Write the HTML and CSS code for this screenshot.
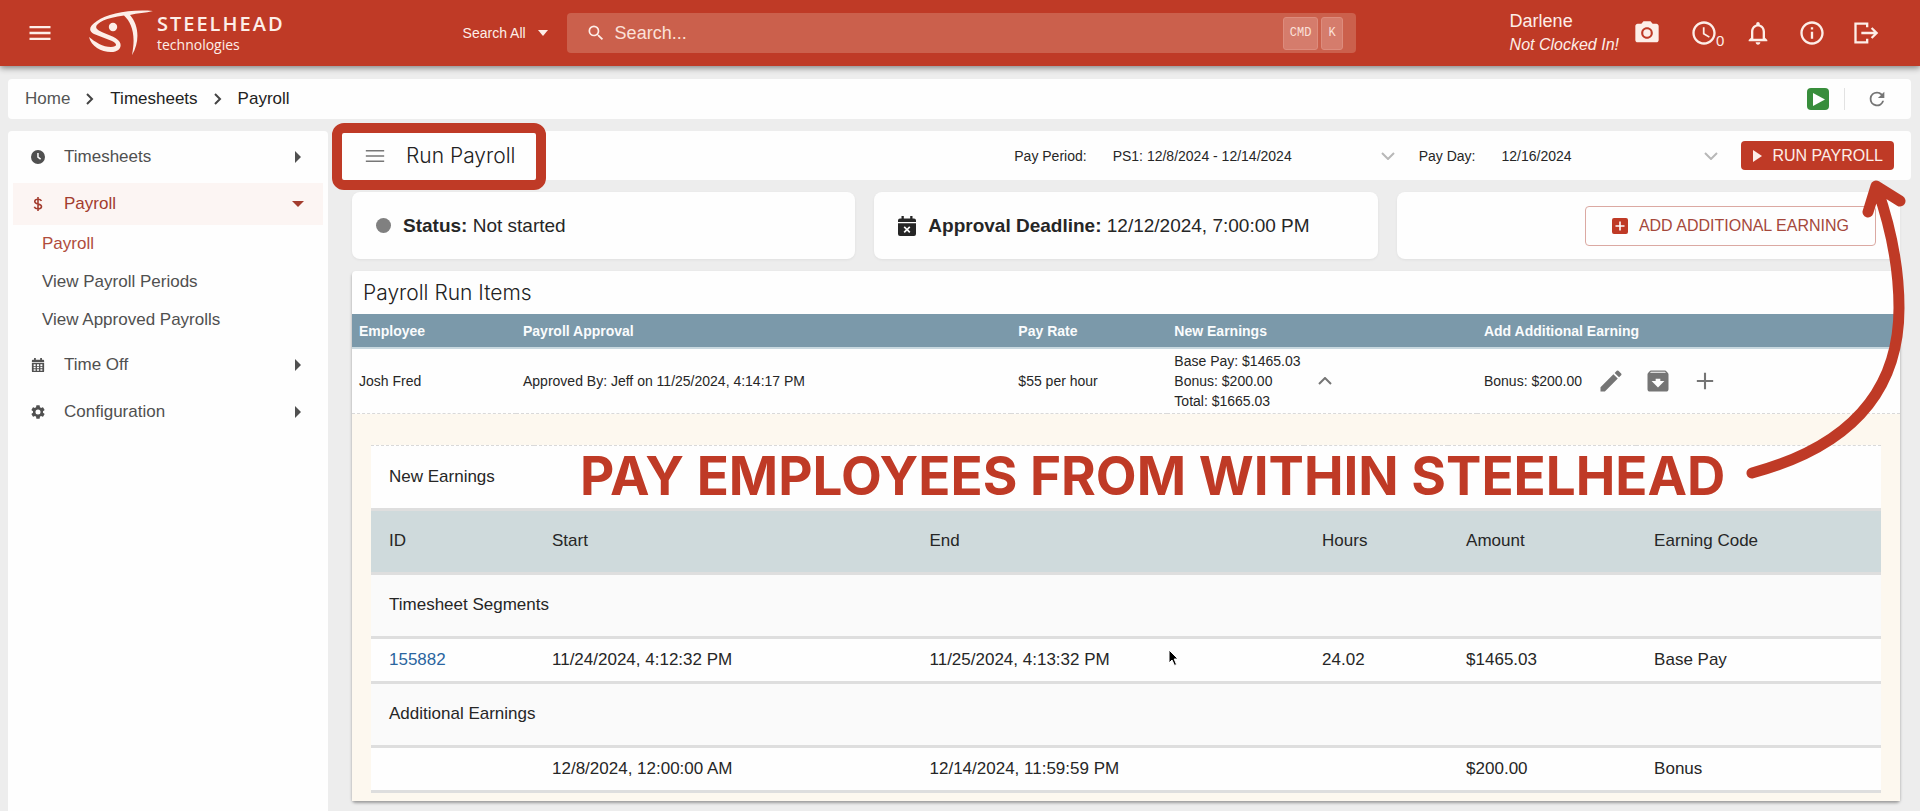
FILE: index.html
```html
<!DOCTYPE html>
<html lang="en">
<head>
<meta charset="utf-8">
<meta name="viewport" content="width=device-width, initial-scale=1">
<title>Run Payroll</title>
<link rel="stylesheet" href="styles.css">
</head>
<body>
<header class="topbar">
  <button class="icon-btn menu-btn" aria-label="Menu"><svg class="icon-lg" viewBox="0 0 24 24"><path d="M3 18h18v-2H3v2zm0-5h18v-2H3v2zm0-7v2h18V6H3z"/></svg></button>
  <a class="brand" href="#">
    <svg class="brand-mark" viewBox="0 0 64 48" aria-hidden="true">
      <path d="M64 2C40 0 18 5 8 12C0 17 -1 22 5 25L23 32C29 35 28 38 22 38C14 38 6 33 0 28C2 37 12 43 22 43C32 43 34 35 29 31C24 26 12 24 8 20C4 16 14 9 35 6.500C43 14 47 26 43 46C51 33 50 16 41 6C48 4 57 4 64 2Z"/>
      <circle cx="24" cy="18" r="4.200"/>
    </svg>
    <span class="brand-text"><span class="brand-name">STEELHEAD</span><span class="brand-sub">technologies</span></span>
  </a>
  <div class="search">
    <button class="scope">Search All <svg class="caret" viewBox="0 0 10 6"><path d="M0 0h10L5 6z"/></svg></button>
    <div class="search-box">
      <svg class="icon-sm" viewBox="0 0 24 24"><path d="M15.500 14h-.79l-.28-.27A6.470 6.470 0 0 0 16 9.500 6.500 6.500 0 1 0 9.500 16c1.610 0 3.090-.59 4.230-1.570l.27.28v.79l5 4.990L20.490 19l-4.990-5zm-6 0C7.010 14 5 11.990 5 9.500S7.010 5 9.500 5 14 7.010 14 9.500 11.990 14 9.500 14z"/></svg>
      <input class="search-input" type="text" placeholder="Search..." aria-label="Search">
      <kbd class="key">CMD</kbd><kbd class="key">K</kbd>
    </div>
  </div>
  <div class="account">
    <div class="user"><span>Darlene</span><em>Not Clocked In!</em></div>
    <button class="icon-btn" aria-label="Camera"><svg class="icon-lg" viewBox="0 0 24 24"><circle cx="12" cy="12" r="3.200"/><path d="M9 2 7.170 4H4c-1.100 0-2 .9-2 2v12c0 1.100.9 2 2 2h16c1.100 0 2-.9 2-2V6c0-1.100-.9-2-2-2h-3.170L15 2H9zm3 15c-2.760 0-5-2.240-5-5s2.240-5 5-5 5 2.240 5 5-2.240 5-5 5z"/></svg></button>
    <button class="icon-btn clock-btn" aria-label="Clock"><svg class="icon-lg" viewBox="0 0 24 24"><path d="M11.990 2C6.470 2 2 6.480 2 12s4.470 10 9.990 10C17.520 22 22 17.520 22 12S17.520 2 11.990 2zM12 20c-4.420 0-8-3.580-8-8s3.580-8 8-8 8 3.580 8 8-3.580 8-8 8zm.5-13H11v6l5.250 3.150.75-1.230-4.500-2.670z"/></svg><sub class="count">0</sub></button>
    <button class="icon-btn" aria-label="Notifications"><svg class="icon-lg" viewBox="0 0 24 24"><path d="M12 22c1.100 0 2-.9 2-2h-4c0 1.100.9 2 2 2zm6-6v-5c0-3.070-1.630-5.640-4.500-6.320V4c0-.83-.67-1.500-1.500-1.500s-1.500.67-1.500 1.500v.68C7.640 5.360 6 7.920 6 11v5l-2 2v1h16v-1l-2-2zm-2 1H8v-6c0-2.480 1.510-4.500 4-4.500s4 2.020 4 4.500v6z"/></svg></button>
    <button class="icon-btn" aria-label="Information"><svg class="icon-lg" viewBox="0 0 24 24"><path d="M11 7h2v2h-2zm0 4h2v6h-2zm1-9C6.480 2 2 6.480 2 12s4.480 10 10 10 10-4.480 10-10S17.520 2 12 2zm0 18c-4.410 0-8-3.590-8-8s3.590-8 8-8 8 3.590 8 8-3.590 8-8 8z"/></svg></button>
    <button class="icon-btn" aria-label="Log out"><svg class="icon-lg" viewBox="0 0 24 24"><path d="M14 3v4h-2V5H4v14h8v-2h2v4H2V3h12zm3.500 4 5 5-5 5-1.400-1.400 2.600-2.600H8v-2h10.700l-2.600-2.600L17.500 7z"/></svg></button>
  </div>
</header>

<div class="page">
  <div class="crumb-bar">
    <nav class="crumbs" aria-label="Breadcrumb">
      <a class="crumb-home" href="#">Home</a>
      <svg class="crumb-sep" viewBox="0 0 8 12"><path d="M1 1l5 5-5 5"/></svg>
      <a href="#">Timesheets</a>
      <svg class="crumb-sep" viewBox="0 0 8 12"><path d="M1 1l5 5-5 5"/></svg>
      <a href="#">Payroll</a>
    </nav>
    <div class="crumb-tools">
      <button class="play-btn" aria-label="Play video"><svg viewBox="0 0 22 22"><rect width="22" height="22" rx="4" fill="#388e3c"/><path d="M6 5v13l12-6.500z" fill="#fff"/></svg></button>
      <button class="refresh-btn" aria-label="Refresh"><svg class="icon-md" viewBox="0 0 24 24"><path d="M17.650 6.350A7.960 7.960 0 0 0 12 4a8 8 0 1 0 7.730 10h-2.080A6 6 0 1 1 12 6c1.660 0 3.140.69 4.220 1.780L13 11h7V4l-2.350 2.350z"/></svg></button>
    </div>
  </div>

  <div class="columns">
    <nav class="sidebar" aria-label="Sections">
      <a class="nav-item" href="#"><svg class="nav-icon" viewBox="0 0 16 16"><path fill-rule="evenodd" d="M8 0a8 8 0 1 0 0 16A8 8 0 0 0 8 0zm-.9 3.500h1.700v4.200l2.700 2-1 1.400-3.400-2.500z"/></svg><span>Timesheets</span><svg class="nav-arrow" viewBox="0 0 12 12"><path d="M3 0l6 6-6 6z"/></svg></a>
      <a class="nav-item active" href="#"><svg class="nav-icon" viewBox="0 0 16 16"><path d="M8 0v16M12 4.500C11 2.800 9.500 2.500 8 2.500c-2 0-3.700.8-3.700 2.600C4.300 9 12 6.800 12 10.800c0 1.800-1.800 2.700-4 2.700-2 0-3.600-.7-4.200-2.300" fill="none" stroke="currentColor" stroke-width="1.800"/></svg><span>Payroll</span><svg class="nav-arrow" viewBox="0 0 12 12"><path d="M0 3h12L6 9z"/></svg></a>
      <a class="sub-item active-sub" href="#">Payroll</a>
      <a class="sub-item" href="#">View Payroll Periods</a>
      <a class="sub-item last-sub" href="#">View Approved Payrolls</a>
      <a class="nav-item" href="#"><svg class="nav-icon" viewBox="0 0 16 16"><path fill-rule="evenodd" d="M3.500 0h2v2h5V0h2v2H14a1 1 0 0 1 1 1v1.500H1V3a1 1 0 0 1 1-1h1.500zM1 5.500h14V15a1 1 0 0 1-1 1H2a1 1 0 0 1-1-1zM3 7v2h2.300V7zm3.800 0v2h2.400V7zm3.900 0v2H13V7zM3 10v1.700h2.300V10zm3.800 0v1.700h2.400V10zm3.900 0v1.700H13V10zM3 12.800v1.700h2.300v-1.700zm3.800 0v1.700h2.400v-1.700zm3.900 0v1.700H13v-1.700z"/></svg><span>Time Off</span><svg class="nav-arrow" viewBox="0 0 12 12"><path d="M3 0l6 6-6 6z"/></svg></a>
      <a class="nav-item" href="#"><svg class="nav-icon gear" viewBox="2 2 20 20"><path d="M19.140 12.940c.04-.3.06-.61.06-.94 0-.32-.02-.64-.07-.94l2.030-1.580a.49.49 0 0 0 .12-.61l-1.920-3.320a.49.49 0 0 0-.59-.22l-2.390.96a7 7 0 0 0-1.620-.94l-.36-2.540a.48.48 0 0 0-.48-.41h-3.840a.48.48 0 0 0-.47.41l-.36 2.540a7 7 0 0 0-1.620.94l-2.390-.96a.49.49 0 0 0-.59.22L2.740 8.870a.48.48 0 0 0 .12.610l2.030 1.580a6 6 0 0 0 0 1.880l-2.030 1.580a.49.49 0 0 0-.12.610l1.920 3.320c.12.22.37.29.59.22l2.390-.96c.5.38 1.030.7 1.620.94l.36 2.540c.05.24.24.41.48.41h3.840c.24 0 .44-.17.47-.41l.36-2.540a7 7 0 0 0 1.620-.94l2.390.96c.22.08.47 0 .59-.22l1.920-3.320a.48.48 0 0 0-.12-.61zM12 15.600a3.600 3.600 0 1 1 0-7.200 3.600 3.600 0 0 1 0 7.200z"/></svg><span>Configuration</span><svg class="nav-arrow" viewBox="0 0 12 12"><path d="M3 0l6 6-6 6z"/></svg></a>
    </nav>

    <main class="main">
      <div class="title-bar">
        <button class="icon-btn title-menu" aria-label="Options"><svg class="icon-md" viewBox="0 0 24 24"><path d="M2 18.500h20v-1.700H2zm0-5.700h20v-1.700H2zM2 5.400v1.700h20V5.400z"/></svg></button>
        <h1 class="heading">Run Payroll</h1>
        <span class="title-frame" aria-hidden="true"></span>
        <div class="filters">
          <label class="filter-label" for="period">Pay Period:</label>
          <span class="picker picker-period"><select id="period"><option>PS1: 12/8/2024 - 12/14/2024</option></select><svg viewBox="0 0 14 8"><path d="M1 1l6 6 6-6"/></svg></span>
          <label class="filter-label" for="payday">Pay Day:</label>
          <span class="picker picker-day"><select id="payday"><option>12/16/2024</option></select><svg viewBox="0 0 14 8"><path d="M1 1l6 6 6-6"/></svg></span>
          <button class="run-btn"><svg viewBox="0 0 10 12"><path d="M1 0l9 6-9 6z"/></svg>RUN PAYROLL</button>
        </div>
      </div>

      <div class="content">
        <section class="cards">
          <div class="card"><span class="dot"></span><span><b>Status:</b> Not started</span></div>
          <div class="card"><svg class="card-icon" viewBox="0 0 18 20"><path fill-rule="evenodd" d="M3.500 0h2.300v2.500h6.400V0h2.300v2.500H16a2 2 0 0 1 2 2V6H0V4.500a2 2 0 0 1 2-2h1.500zM0 7.200h18V18a2 2 0 0 1-2 2H2a2 2 0 0 1-2-2zm6.800 3L5.600 11.400l2.200 2.200-2.200 2.200 1.200 1.200L9 14.800l2.200 2.200 1.200-1.200-2.200-2.200 2.200-2.200-1.200-1.200L9 12.400z"/></svg><span><b>Approval Deadline:</b> 12/12/2024, 7:00:00 PM</span></div>
          <div class="card card-action"><button class="add-btn"><svg viewBox="0 0 16 16"><path fill-rule="evenodd" d="M2 0h12a2 2 0 0 1 2 2v12a2 2 0 0 1-2 2H2a2 2 0 0 1-2-2V2a2 2 0 0 1 2-2zm5.200 3.500v3.700H3.500v1.600h3.700v3.700h1.600V8.800h3.700V7.200H8.800V3.500z"/></svg>ADD ADDITIONAL EARNING</button></div>
        </section>

        <section class="panel">
          <h2 class="heading panel-title">Payroll Run Items</h2>
          <table class="run-table">
            <colgroup><col class="r1"><col class="r2"><col class="r3"><col class="r4"><col class="r5"></colgroup>
            <thead><tr><th>Employee</th><th>Payroll Approval</th><th>Pay Rate</th><th>New Earnings</th><th>Add Additional Earning</th></tr></thead>
            <tbody><tr>
              <td>Josh Fred</td>
              <td>Approved By: Jeff on 11/25/2024, 4:14:17 PM</td>
              <td>$55 per hour</td>
              <td><div class="earn"><span>Base Pay: $1465.03<br>Bonus: $200.00<br>Total: $1665.03</span><button class="icon-btn collapse" aria-label="Collapse"><svg viewBox="0 0 14 8"><path d="M1 7l6-6 6 6"/></svg></button></div></td>
              <td><div class="bonus"><span>Bonus: $200.00</span>
                <button class="icon-btn" aria-label="Edit"><svg class="icon-lg" viewBox="0 0 24 24"><path d="M3 17.250V21h3.750L17.810 9.940l-3.750-3.750L3 17.250zM20.710 7.040a1 1 0 0 0 0-1.410l-2.340-2.340a1 1 0 0 0-1.410 0l-1.830 1.830 3.750 3.750 1.830-1.830z"/></svg></button>
                <button class="icon-btn" aria-label="Archive"><svg class="icon-lg" viewBox="0 0 24 24"><path d="M20.540 5.230l-1.390-1.680C18.880 3.210 18.470 3 18 3H6c-.47 0-.88.21-1.160.55L3.460 5.230C3.170 5.570 3 6.020 3 6.500V19c0 1.100.9 2 2 2h14c1.100 0 2-.9 2-2V6.500c0-.48-.17-.93-.46-1.270zM12 17.500L6.500 12H10v-2h4v2h3.500L12 17.500zM5.120 5l.81-1h12l.94 1H5.120z"/></svg></button>
                <button class="icon-btn" aria-label="Add"><svg class="icon-lg" viewBox="0 0 24 24"><path d="M19 12.900h-6.100V19h-1.800v-6.100H5v-1.800h6.100V5h1.800v6.100H19z"/></svg></button></div></td>
            </tr></tbody>
          </table>
          <div class="detail">
            <table class="detail-table">
              <colgroup><col class="d1"><col class="d2"><col class="d3"><col class="d4"><col class="d5"><col class="d6"></colgroup>
              <tbody>
                <tr class="tall"><td colspan="6">New Earnings</td></tr>
                <tr class="tall head"><th>ID</th><th>Start</th><th>End</th><th>Hours</th><th>Amount</th><th>Earning Code</th></tr>
                <tr class="tall group"><td colspan="6">Timesheet Segments</td></tr>
                <tr><td><a href="#">155882</a></td><td>11/24/2024, 4:12:32 PM</td><td>11/25/2024, 4:13:32 PM</td><td>24.02</td><td>$1465.03</td><td>Base Pay</td></tr>
                <tr class="tall group"><td colspan="6">Additional Earnings</td></tr>
                <tr><td></td><td>12/8/2024, 12:00:00 AM</td><td>12/14/2024, 11:59:59 PM</td><td></td><td>$200.00</td><td>Bonus</td></tr>
              </tbody>
            </table>
          </div>
          <p class="callout">PAY EMPLOYEES FROM WITHIN STEELHEAD</p>
          <svg class="callout-arrow" viewBox="1740 175 170 310" aria-hidden="true"><path d="M1752 473C1845 448 1899 396 1899 308C1899 264 1890 225 1877 188M1868 212L1876 186L1900 201"/></svg>
          <svg class="pointer" viewBox="0 0 12 18" aria-hidden="true"><path d="M1 1v13l3-3 2.500 5.500 2-1L6.200 10H10z"/></svg>
        </section>
      </div>
    </main>
  </div>
</div>
</body>
</html>
```

FILE: styles.css
```css
:root {
  --red: #bf3a26;
  --grey: #757575;
  --ink: #262626;
}
* { box-sizing: border-box; }
body {
  margin: 0;
  min-height: 100vh;
  display: flex;
  flex-direction: column;
  background: #ededed;
  color: var(--ink);
  font-family: "Liberation Sans", Arial, sans-serif;
  font-size: 14px;
}
button, input, select { font: inherit; color: inherit; }
button { border: 0; background: none; padding: 0; display: flex; align-items: center; cursor: pointer; }
a { color: inherit; text-decoration: none; }
svg { display: block; fill: currentColor; flex: none; }
.icon-lg { width: 28px; height: 28px; }
.icon-md { width: 22px; height: 22px; }
.icon-sm { width: 20px; height: 20px; }

/* Top bar */
.topbar {
  display: flex;
  align-items: center;
  height: 66px;
  padding: 0 40px 0 26px;
  background: var(--red);
  color: #fdeee8;
  box-shadow: 0 2px 6px rgba(0, 0, 0, .45);
  z-index: 1;
}
.brand { display: flex; align-items: center; gap: 4px; margin-left: 35px; }
.brand-mark { width: 64px; height: 48px; }
.brand-text { display: flex; flex-direction: column; font-family: "Open Sans", sans-serif; }
.brand-name { font-size: 20px; line-height: 23px; letter-spacing: 2px; font-weight: 600; }
.brand-sub { font-size: 14px; line-height: 19px; }
.search { display: flex; flex: 1; gap: 19px; margin-left: 178px; }
.scope { gap: 12px; white-space: nowrap; }
.caret { width: 10px; height: 6px; }
.search-box {
  display: flex;
  align-items: center;
  flex: 1;
  gap: 3px;
  height: 40px;
  padding: 0 13px 0 19px;
  border-radius: 4px;
  background: #cb604c;
}
.search-input { flex: 1; min-width: 0; border: 0; background: none; outline: 0; padding: 0 6px; font-size: 18px; }
.search-input::placeholder { color: #fbe0d9; opacity: 1; }
.key {
  padding: 0 6px;
  border: 1px solid #dd8c7d;
  border-radius: 3px;
  background: #d57c6c;
  color: #fbe0d9;
  font-family: "Liberation Mono", monospace;
  font-size: 12px;
  line-height: 31px;
}
.account { display: flex; align-items: center; gap: 26px; margin-left: 154px; }
.user { display: flex; flex-direction: column; margin-right: -12px; font-size: 16px; line-height: 23px; white-space: nowrap; }
.user span { font-size: 18px; }
.clock-btn { position: relative; margin-left: 3px; }
.count { position: absolute; left: 26px; bottom: 0; font-size: 15px; line-height: 13px; }

/* Page */
.page { flex: 1; display: flex; flex-direction: column; gap: 12px; padding: 13px 9px 0 8px; }
.crumb-bar {
  display: flex;
  align-items: center;
  justify-content: space-between;
  height: 40px;
  padding: 0 23px 0 17px;
  border-radius: 4px;
  background: #fefefe;
}
.crumbs { display: flex; align-items: center; gap: 16px; font-size: 17px; color: #222; }
.crumb-home { color: #555; }
.crumb-sep { width: 8px; height: 12px; fill: none; stroke: #444; stroke-width: 2; }
.crumb-tools { display: flex; align-items: center; }
.play-btn svg { width: 22px; height: 22px; }
.play-btn { padding-right: 15px; }
.refresh-btn { border-left: 1px solid #e2e2e2; padding-left: 21px; color: var(--grey); }

.columns { flex: 1; display: flex; gap: 12px; }
.sidebar {
  display: flex;
  flex-direction: column;
  width: 320px;
  padding: 5px;
  border-radius: 4px 4px 0 0;
  background: #fefefe;
  color: #505050;
  font-size: 17px;
}
.nav-item { display: flex; align-items: center; height: 42px; margin-bottom: 5px; padding: 0 19px 0 18px; }
.nav-item span { flex: 1; margin-left: 19px; }
.nav-item.active { margin-bottom: 0; background: #fcf5f3; color: #a33c2e; }
.nav-icon { width: 14px; height: 14px; }
.nav-arrow { width: 12px; height: 12px; }
.sub-item { height: 38px; line-height: 38px; padding-left: 29px; }
.active-sub { color: #b04c3c; }
.last-sub { margin-bottom: 5px; }

/* Main */
.main { flex: 1; min-width: 0; }
.title-bar {
  position: relative;
  display: flex;
  align-items: center;
  height: 49px;
  padding: 0 17px 0 24px;
  border-radius: 4px;
  background: #fefefe;
}
.title-menu { color: #777; margin-right: 20px; }
.heading { margin: 0; font-family: Inter, "Liberation Sans", sans-serif; font-size: 21px; font-weight: 300; color: #222; }
.title-frame {
  position: absolute;
  left: -8px;
  top: -8px;
  width: 214px;
  height: 67px;
  border: 10px solid var(--red);
  border-radius: 12px;
}
.filters { display: flex; align-items: center; margin-left: auto; }
.filter-label { margin-right: 26px; }
.picker { position: relative; display: flex; align-items: center; }
.picker select { width: 100%; border: 0; padding: 0; background: none; appearance: none; }
.picker svg { position: absolute; right: 0; width: 14px; height: 8px; fill: none; stroke: #b8b8b8; stroke-width: 2; pointer-events: none; }
.picker-period { width: 282px; margin-right: 24px; }
.picker-day { width: 217px; margin-right: 23px; }
.run-btn { gap: 10px; height: 29px; padding: 0 11px; border-radius: 4px; background: var(--red); color: #fdeee8; font-size: 16px; }
.run-btn svg { width: 10px; height: 12px; }

.content { padding: 12px 11px 9px 12px; }
.cards { display: grid; grid-template-columns: repeat(3, 1fr); gap: 19px; margin-bottom: 12px; }
.card {
  display: flex;
  align-items: center;
  gap: 12px;
  height: 67px;
  padding: 0 24px;
  border-radius: 8px;
  background: #fefefe;
  box-shadow: 0 1px 3px rgba(0, 0, 0, .06);
  font-size: 19px;
}
.dot { width: 15px; height: 15px; border-radius: 50%; background: #808080; }
.card-icon { width: 18px; height: 20px; }
.card-action { justify-content: flex-end; }
.add-btn { gap: 11px; height: 40px; padding: 0 26px; border: 1px solid #dba9a2; border-radius: 4px; color: #a5483b; font-size: 16px; }
.add-btn svg { width: 16px; height: 16px; color: var(--red); }

.panel {
  position: relative;
  border-radius: 4px;
  background: #fefefe;
  box-shadow: 0 2px 3px rgba(0, 0, 0, .35);
}
.panel-title { height: 43px; padding-left: 11px; line-height: 43px; }
table { width: 100%; border-collapse: collapse; table-layout: fixed; }
th, td { padding: 0; text-align: left; }
.run-table th { height: 34px; padding: 0 7px; border-bottom: 2px solid #c9d9e0; background: #7b99aa; color: #fafcfd; }
.run-table td { height: 65px; padding: 0 7px; border-bottom: 1px dashed #d9d9d9; line-height: 20px; }
.r1 { width: 164px; }
.r2 { width: 32%; }
.r3 { width: 156px; }
.r4 { width: 20%; }
.earn, .bonus { display: flex; align-items: center; color: #262626; }
.earn { gap: 18px; }
.bonus { gap: 19px; }
.bonus .icon-btn { color: var(--grey); }
.bonus span { margin-right: -4px; }
.collapse svg { width: 14px; height: 8px; fill: none; stroke: var(--grey); stroke-width: 2; }

.detail { padding: 31px 19px 8px; background: #fdf8ef; }
.detail-table { background: #fefefe; border-top: 1px dashed #d9d9d9; font-size: 17px; }
.detail-table td, .detail-table th { height: 45px; padding: 0 18px; border-bottom: 3px solid #dedede; font-weight: 400; }
.detail-table .tall td, .detail-table .tall th { height: 64px; }
.detail-table .head th { background: #cfdadc; }
.detail-table .group td { background: #fafafa; }
.detail-table a { color: #2a659f; }
.d1 { width: 163px; }
.d2 { width: 25%; }
.d3 { width: 26%; }
.d4 { width: 144px; }
.d5 { width: 188px; }

/* Annotations over the panel */
.callout {
  position: absolute;
  left: 228px;
  top: 169px;
  margin: 0;
  color: var(--red);
  font-family: Inter, "Noto Sans", sans-serif;
  font-size: 53px;
  font-weight: 700;
  line-height: 72px;
  white-space: nowrap;
}
.callout-arrow {
  position: absolute;
  right: -10px;
  top: -96px;
  width: 170px;
  height: 310px;
  fill: none;
  stroke: var(--red);
  stroke-width: 11;
  stroke-linecap: round;
  stroke-linejoin: round;
}
.pointer { position: absolute; left: 816px; top: 378px; width: 12px; height: 18px; fill: #000; stroke: #fff; stroke-width: 1; }
```
